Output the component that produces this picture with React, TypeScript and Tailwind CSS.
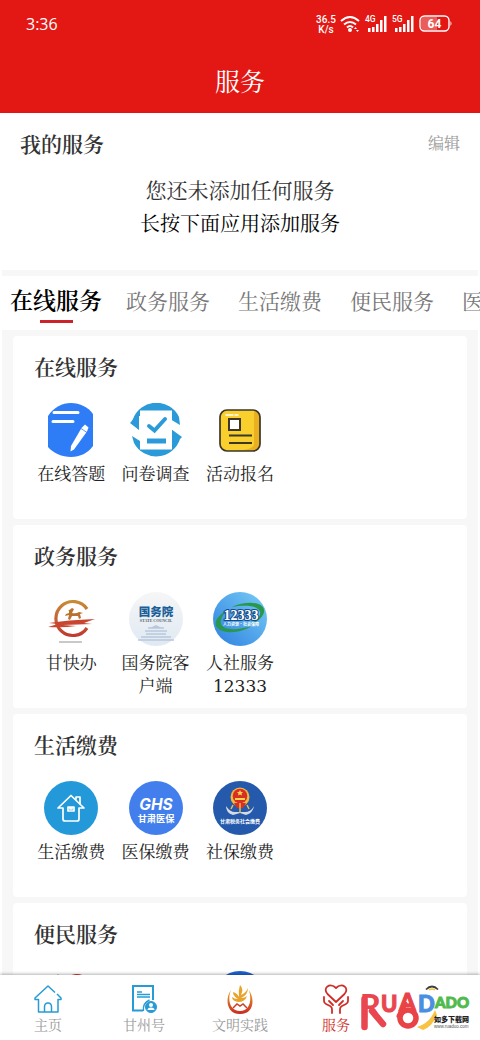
import React from "react"

type Service = { label: string; icon?: React.ReactNode }
type Group = { title: string; services: Service[] }

const sans = "Noto Sans CJK SC, sans-serif"

const AnswerIcon = () => (
  <svg viewBox="0 0 54 54" className="size-full">
    <path d="M4 13C10 4 18 0 27 0s17 4 22 11v32c-5 7-13 11-22 11S9 50 4 44z" fill="#2f7df6" />
    <path d="M10 9.500h24M9 18.500h20" stroke="#fff" strokeWidth="3" strokeLinecap="round" />
    <path d="M37.500 25 41 21.500 44.500 24.500 43 28.500 30 46.500 26.500 48.500 27 43z" fill="#fff" />
    <path d="m37 25.500 6 4" stroke="#2f7df6" strokeWidth=".8" />
  </svg>
)

const SurveyIcon = () => (
  <svg viewBox="0 0 54 54" className="size-full">
    <path d="M2 19l2-3A25 25 0 0 1 50 14l1 8-10-6-31-3v14L1 20z" fill="#2a9bd8" />
    <path d="M3 33l8 5 31 5V26l11 8-2 2a25 25 0 0 1-46 4z" fill="#2a9bd8" />
    <path d="M11 7.500h32v39H11z" fill="#fff" />
    <path d="m20 23 5.500 4.500L36 16" fill="none" stroke="#2a9bd8" strokeWidth="4" strokeLinecap="round" />
    <path d="M18 35.500h19v5H18z" fill="#2a9bd8" />
  </svg>
)

const SignupIcon = () => (
  <svg viewBox="0 0 54 54" className="size-full">
    <rect x="7" y="7" width="40" height="41" rx="7" fill="#f8cf2c" />
    <path d="M41 7q6 1 6 7v27q0 7-7 7H14q27 0 27-7z" fill="#eab022" />
    <rect x="7" y="7" width="40" height="41" rx="7" fill="none" stroke="#3d3728" strokeWidth="1.700" />
    <path d="M13 12h7m2 0h3" stroke="#fff" strokeWidth="1.500" strokeLinecap="round" />
    <rect x="16" y="16" width="11" height="11" fill="#fff" stroke="#3d3728" strokeWidth="2" />
    <path d="M16 32.500h23M16 40h23" stroke="#3d3728" strokeWidth="1.800" />
  </svg>
)

const GanKuaiBanIcon = () => (
  <svg viewBox="0 0 54 54" className="size-full">
    <defs>
      <linearGradient id="ring" x1="0" y1="0" x2="0" y2="1">
        <stop offset="0" stopColor="#c98a35" />
        <stop offset="1" stopColor="#c03a31" />
      </linearGradient>
    </defs>
    <path d="M43 17A17 17 0 1 0 43 36" fill="none" stroke="url(#ring)" strokeWidth="3.200" />
    <path d="M5 31q18-3 46-4l-11 4 8 1-29 1 13 1q-12 2-28 1l10-3z" fill="#c8452f" />
    <path d="m24 19 4-3 2 1-2 4q4 1 7-1l4 1-3 1 1 4-2 1-1-3h-6l-2 4-2-1 1-4-4 1 1-2 3-1v-2z" fill="#b9732f" />
    <path d="M15 50h23" stroke="#777" strokeWidth=".8" />
  </svg>
)

const StateCouncilIcon = () => (
  <svg viewBox="0 0 54 54" className="size-full">
    <defs>
      <linearGradient id="council" x1="0" y1="0" x2="0" y2="1">
        <stop offset="0" stopColor="#f6f6f6" />
        <stop offset="1" stopColor="#dfe9f3" />
      </linearGradient>
    </defs>
    <circle cx="27" cy="27" r="27" fill="url(#council)" />
    <text x="27" y="24" textAnchor="middle" fontFamily={sans} fontSize="11.500" fontWeight="900" fill="#1b5f98">国务院</text>
    <text x="27" y="30" textAnchor="middle" fontFamily="Liberation Serif, serif" fontSize="4" fontWeight="700" fill="#536270">STATE COUNCIL</text>
    <path d="M19 36h16M16 39h22M17 42h20M12 45h30M9 48h36" stroke="#b9c8dc" strokeWidth="1.300" />
    <path d="m21 36 6-3 6 3z" fill="#b8c8dc" />
  </svg>
)

const HotlineIcon = () => (
  <svg viewBox="0 0 54 54" className="size-full">
    <defs>
      <linearGradient id="hotline" x1="0" y1="1" x2="1" y2="0">
        <stop offset="0" stopColor="#2d7fe0" />
        <stop offset="1" stopColor="#78cdf5" />
      </linearGradient>
    </defs>
    <circle cx="27" cy="27" r="27" fill="url(#hotline)" />
    <path d="M19 15C34 8 53 10 51 20c-1 6-8 10-14 13 7-5 11-9 10-13-2-7-16-7-28-5z" fill="#2a984c" />
    <path d="M13 19C-1 27-1 38 14 40c9 1 18-2 25-6-14 4-28 5-31-2-1-4 1-8 5-13z" fill="#2a984c" />
    <text x="28" y="28" textAnchor="middle" fontFamily="Liberation Serif, serif" fontSize="14" fontWeight="700" fill="#fff" stroke="#194a88" strokeWidth="2" paintOrder="stroke">12333</text>
    <text x="28" y="34" textAnchor="middle" fontFamily={sans} fontSize="4" fontWeight="700" fill="#fff">人力资源·社会保障</text>
  </svg>
)

const LivingIcon = () => (
  <svg viewBox="0 0 54 54" className="size-full">
    <circle cx="27" cy="27" r="27" fill="#2499da" />
    <g fill="none" stroke="#fff" strokeWidth="1.700" strokeLinecap="round" strokeLinejoin="round">
      <path d="M19 27h-5l13-12.500L40 27h-5v11q0 2-2 2H21q-2 0-2-2V27" />
      <path d="M32 18v-2h4v7M24 26h6v4h-6zM26 26v2h2v-2" />
    </g>
  </svg>
)

const MedicalIcon = () => (
  <svg viewBox="0 0 54 54" className="size-full">
    <circle cx="27" cy="27" r="27" fill="#427fec" />
    <text x="27" y="28.500" textAnchor="middle" fontFamily="Inter, sans-serif" fontSize="15.500" fontWeight="700" fontStyle="italic" fill="#fff">GHS</text>
    <text x="27" y="41" textAnchor="middle" fontFamily={sans} fontSize="9.200" fontWeight="700" fill="#fff">甘肃医保</text>
  </svg>
)

const SocialIcon = () => (
  <svg viewBox="0 0 54 54" className="size-full">
    <circle cx="27" cy="27" r="27" fill="#2459ab" />
    <path d="M13 25q4 6 9 6h10q6 0 9-6-1 7-8 9l-6-2-7 2q-7-2-7-9z" fill="#d4dbe6" />
    <circle cx="27" cy="16" r="9.500" fill="#f1b83a" />
    <circle cx="27" cy="15" r="7.300" fill="#d92e25" />
    <path d="m27 9 1 2h2l-1.500 1.500.5 2-2-1-2 1 .5-2L24 11h2zM22 19h10v-2H22z" fill="#f8d64b" />
    <path d="M21 22h12l-3 5h-6z" fill="#d92e25" />
    <path d="M27 22v10M20 24l-2 4M34 24l2 4" stroke="#eebd42" strokeWidth="1.500" />
    <text x="27" y="42" textAnchor="middle" fontFamily={sans} fontSize="5" fontWeight="700" fill="#fff">甘肃税务社会缴费</text>
  </svg>
)

const RedMarkIcon = () => (
  <svg viewBox="0 0 54 54" className="size-full">
    <circle cx="33" cy="17" r="13" fill="#d9302c" />
    <circle cx="14" cy="6" r="1.500" fill="#888" />
  </svg>
)

const BlueMarkIcon = () => (
  <svg viewBox="0 0 54 54" className="size-full">
    <circle cx="27" cy="28" r="27" fill="#1f63cf" />
  </svg>
)

const groups: Group[] = [
  {
    title: "在线服务",
    services: [
      { label: "在线答题", icon: <AnswerIcon /> },
      { label: "问卷调查", icon: <SurveyIcon /> },
      { label: "活动报名", icon: <SignupIcon /> }
    ]
  },
  {
    title: "政务服务",
    services: [
      { label: "甘快办", icon: <GanKuaiBanIcon /> },
      { label: "国务院客户端", icon: <StateCouncilIcon /> },
      { label: "人社服务12333", icon: <HotlineIcon /> }
    ]
  },
  {
    title: "生活缴费",
    services: [
      { label: "生活缴费", icon: <LivingIcon /> },
      { label: "医保缴费", icon: <MedicalIcon /> },
      { label: "社保缴费", icon: <SocialIcon /> }
    ]
  },
  {
    title: "便民服务",
    services: [{ label: "", icon: <RedMarkIcon /> }, { label: "" }, { label: "", icon: <BlueMarkIcon /> }]
  }
]

const tabs = ["在线服务", "政务服务", "生活缴费", "便民服务", "医疗服务"]

const HomeIcon = () => (
  <svg viewBox="0 0 28 30" className="h-[30px] w-7" fill="none" stroke="#269bd5" strokeWidth="1.500" strokeLinejoin="round">
    <path d="M23 10l4 4v1.500h-3V28h-6.500v-5q0-4-3.500-4t-3.500 4v5H4.500V15.500H1V14L14 2l7 6.500M10.500 28h7" />
  </svg>
)

const AccountIcon = () => (
  <svg viewBox="0 0 28 30" className="h-[30px] w-7" fill="none" stroke="#269bd5">
    <path d="M13 26.500H3V2h20v14" strokeWidth="2" />
    <path d="M7 8h5M7 10.500h13M7 13h13" strokeWidth="1.300" />
    <circle cx="21" cy="23" r="5.500" fill="#269bd5" />
    <circle cx="21" cy="21" r="2" fill="#fff" stroke="none" />
    <path d="M17.500 26q0-2.500 3.500-2.500t3.500 2.500z" fill="#fff" stroke="none" />
    <path d="M13.500 27q-1-8 6-11" strokeWidth="1.400" />
  </svg>
)

const CivicIcon = () => (
  <svg viewBox="0 0 28 30" className="h-[30px] w-7">
    <defs>
      <linearGradient id="civic" x1="0" y1="0" x2="0" y2="1">
        <stop offset="0" stopColor="#e9a52b" />
        <stop offset="1" stopColor="#c92a22" />
      </linearGradient>
    </defs>
    <path d="M5 6C-1 14 0 30 14 30S29 15 23 6c3 10 1 21-9 21S1 16 5 6z" fill="url(#civic)" />
    <path d="M14 1q4 4 1 10 5-2 7-7 0 7-7 10 4 0 6-2-2 6-9 6-6-1-6-5 2 2 6 2-5-3-5-7 4 1 6 5-1-6 1-12z" fill="#e8a32a" />
    <path d="m7 24 4-4 3 2 3-2 4 4" fill="none" stroke="#ca4028" strokeWidth="1.500" />
  </svg>
)

const ServiceIcon = () => (
  <svg viewBox="0 0 28 30" className="h-[30px] w-7" fill="none" stroke="#cf2f27" strokeWidth="1.800" strokeLinecap="round" strokeLinejoin="round">
    <path d="M14 18 5.500 10C0 4 8-2 14 4c6-6 14 0 8.500 6z" />
    <path d="M2 13v4q0 2 2 3l4 2q2 1 2 3v4M26 13v4q0 2-2 3l-4 2q-2 1-2 3v4M7 17l4 4M21 17l-4 4" />
  </svg>
)

const MineIcon = () => (
  <svg viewBox="0 0 28 30" className="h-[30px] w-7" fill="none">
    <path d="M8 5.500q6-6 12 0" stroke="#3d3d3d" strokeWidth="1.700" />
    <path d="M11 6q3-2 6 0" stroke="#f5c13b" strokeWidth="1.500" />
  </svg>
)

const navItems = [
  { label: "主页", icon: <HomeIcon /> },
  { label: "甘州号", icon: <AccountIcon /> },
  { label: "文明实践", icon: <CivicIcon /> },
  { label: "服务", icon: <ServiceIcon />, active: true },
  { label: "", icon: <MineIcon /> }
]

const StatusIcons = () => (
  <svg viewBox="0 0 140 22" className="h-[22px] w-[140px]" fill="#fff" fontFamily="Roboto, sans-serif" fontWeight="500">
    <text x="10" y="10" fontSize="10" textAnchor="middle">36.5</text>
    <text x="10" y="19.500" fontSize="10" textAnchor="middle">K/s</text>
    <g fill="none" stroke="#fff" strokeWidth="2">
      <path d="M25 8q9-8 18 0M28 11.500q6-5 12 0M31 14.500q3-3 6 0" />
    </g>
    <circle cx="34" cy="17" r="2" />
    <path d="m38 16 1.500-2 1.500 2zm2 1 1.500 2 1.500-2z" />
    <text x="49" y="9" fontSize="8.500">4G</text>
    <path d="M52 15h2.500v4H52zm4-1h2.500v5H56zm4-3h2.500v8H60zm4-4h2.500v12H64zm4-4h2.500v16H68z" />
    <text x="76" y="9" fontSize="8.500">5G</text>
    <path d="M79 15h2.500v4H79zm4-1h2.500v5H83zm4-3h2.500v8H87zm4-4h2.500v12H91zm4-4h2.500v16H95z" />
    <rect x="104" y="3" width="29" height="15" rx="4.500" fill="none" stroke="#fff" strokeWidth="1.400" />
    <path d="M107 4h14v13h-14q-2-1-2-3V7q0-2 2-3z" opacity=".3" />
    <path d="M134.500 8v5q2-2.500 0-5z" />
    <text x="118.500" y="15" fontSize="12" fontWeight="700" textAnchor="middle">64</text>
  </svg>
)

const Watermark = () => (
  <svg viewBox="0 0 112 42" className="pointer-events-none absolute top-4 right-2 h-[42px] w-28" fontFamily="Lato, sans-serif" fontWeight="900">
    <path d="M4.500 8v28M12 20l11 13" stroke="#ea4650" strokeWidth="6.500" strokeLinecap="round" />
    <text x="0" y="27" fontSize="32" fill="#ea4650">R</text>
    <text x="21" y="21" fontSize="22" fill="#ea4650" stroke="#ea4650">U</text>
    <path d="M45 13 39 25" stroke="#e94247" strokeWidth="5" strokeLinecap="round" />
    <ellipse cx="48" cy="27" rx="8" ry="8" fill="none" stroke="#e94247" strokeWidth="5.500" />
    <path d="M57 36q13-4 18-17l2 5q-5 12-14 15z" fill="#f8c245" />
    <text x="39" y="20" fontSize="24" fill="#e94247" stroke="#e94247">A</text>
    <text x="58" y="21" fontSize="22" fill="#4a8fe0" stroke="#4a8fe0">D</text>
    <text x="75" y="17" fontSize="15" fill="#52ba4d" stroke="#52ba4d">ADO</text>
    <text x="74" y="31" fontFamily={sans} fontSize="7" fill="#222">如多下载网</text>
    <text x="74" y="37" fontFamily="Liberation Sans, sans-serif" fontSize="4.500" fontWeight="400" fill="#555">www.ruaduo.com</text>
  </svg>
)

const ServiceCard = ({ title, services }: Group) => (
  <section className="rounded bg-white px-4 pt-4 pb-2.5">
    <h2 className="px-[5px] text-[21px] leading-7 font-semibold text-[#333]">{title}</h2>
    <ul className="mt-[23px] grid grid-cols-5">
      {services.map(({ label, icon }, index) => (
        <li key={index}>
          <button type="button" className="flex w-full flex-col items-center gap-1.5">
            <span className="size-[54px]">{icon}</span>
            <span className="min-h-[46px] w-[72px] text-center font-['DejaVu_Serif','Noto_Serif_CJK_SC','Noto_Sans_CJK_SC',serif] text-[17px] leading-[23px] break-words text-[#222]">
              {label}
            </span>
          </button>
        </li>
      ))}
    </ul>
  </section>
)

export default function App() {
  return (
    <div className="flex h-screen flex-col overflow-hidden bg-white font-['Noto_Serif_CJK_SC','Noto_Sans_CJK_SC',serif]">
      <header className="bg-[#e31713] text-white">
        <div className="flex h-12 items-center justify-between pr-6 pl-[26px]">
          <time className="font-['Open_Sans',sans-serif] text-base">3:36</time>
          <StatusIcons />
        </div>
        <h1 className="h-[65px] text-center text-[25px] leading-[65px]">服务</h1>
      </header>

      <main className="flex-1 overflow-y-auto [scrollbar-width:none]">
        <section className="pt-4 pb-[31px]">
          <div className="flex items-center justify-between px-5">
            <h2 className="text-[21px] leading-7 font-semibold text-[#333]">我的服务</h2>
            <button type="button" className="text-base text-[#999]">编辑</button>
          </div>
          <div className="mt-4 text-center">
            <p className="text-[21px] leading-[33px] text-[#333]">您还未添加任何服务</p>
            <p className="text-[20px] leading-[33px] text-black">长按下面应用添加服务</p>
          </div>
        </section>

        <div className="mx-0.5 bg-[#f7f7f7] pt-1.5">
          <nav className="-mx-0.5 flex h-[54px] overflow-hidden bg-white">
            {tabs.map((tab, index) => (
              <button
                key={tab}
                type="button"
                className={
                  index === 0
                    ? "flex w-28 shrink-0 flex-col items-center pt-2 text-[23px] leading-8 font-semibold text-black"
                    : "flex w-28 shrink-0 flex-col items-center pt-2 text-[21px] leading-8 text-[#777]"
                }>
                {tab}
                {index === 0 && <span className="mt-1 h-[3px] w-[33px] bg-[#cb2329]"></span>}
              </button>
            ))}
          </nav>

          <div className="flex flex-col gap-1.5 px-[11px] py-1.5">
            {groups.map((group) => (
              <ServiceCard key={group.title} {...group} />
            ))}
          </div>
        </div>
      </main>

      <nav className="relative grid h-[65px] shrink-0 grid-cols-5 bg-white shadow-[0_-1px_3px_rgba(0,0,0,0.3)]">
        {navItems.map(({ label, icon, active }, index) => (
          <a
            key={index}
            href="#"
            aria-label={label || "我的"}
            className={
              active
                ? "flex flex-col items-center pt-[9px] text-sm leading-5 text-[#cf2f27]"
                : "flex flex-col items-center pt-[9px] text-sm leading-5 text-[#999]"
            }>
            {icon}
            <span>{label}</span>
          </a>
        ))}
        <Watermark />
      </nav>
    </div>
  )
}
